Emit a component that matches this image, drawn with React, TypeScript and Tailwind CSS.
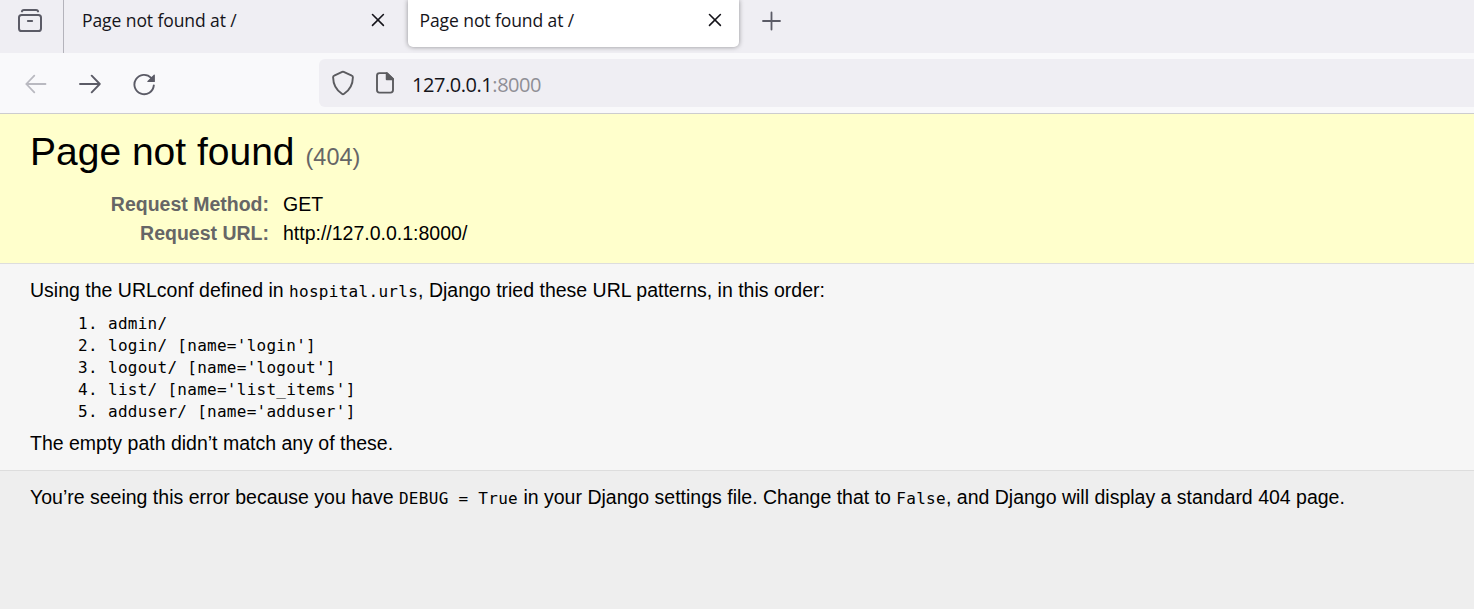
import type { ReactNode } from "react";

const patterns = [
  "admin/",
  "login/ [name='login']",
  "logout/ [name='logout']",
  "list/ [name='list_items']",
  "adduser/ [name='adduser']",
];

function Code({ children }: { children: ReactNode }) {
  return (
    <span className="font-['DejaVu_Sans_Mono',monospace] text-[16px] leading-none tracking-[0.29px]">
      {children}
    </span>
  );
}

function CloseIcon() {
  return (
    <svg width="14" height="14" viewBox="0 0 14 14" fill="none" stroke="#15141a" strokeWidth="1.6" strokeLinecap="round">
      <path d="M1.5 1.5 12.4 12.4M12.4 1.5 1.5 12.4" />
    </svg>
  );
}

function TabTitle() {
  return (
    <span className="font-['Open_Sans',sans-serif] text-[17.5px] leading-6 tracking-[-0.08px] whitespace-nowrap text-[#15141a]">
      Page not found at /
    </span>
  );
}

function TabBar() {
  return (
    <div className="flex h-[53px] items-start bg-[#efeef3]">
      <div className="flex h-[53px] w-16 shrink-0 border-r border-[#b4b3bb] pt-2 pl-[17px]">
        <svg width="26" height="26" viewBox="0 0 26 26" fill="none" stroke="#5b5b66" strokeWidth="2" strokeLinecap="round" strokeLinejoin="round">
          <path d="M4.900 3.400c.3-1 .9-1.400 1.900-1.400h12.400c1 0 1.600.4 1.900 1.400" />
          <rect x="2" y="7" width="22" height="16" rx="2.600" />
          <path d="M10.900 13h4.200" />
        </svg>
      </div>
      <div className="flex h-[47px] w-[344px] shrink-0 items-start justify-between pr-[23px] pl-[18px]">
        <div className="flex pt-[8px]">
          <TabTitle />
        </div>
        <div className="pt-[13px]">
          <CloseIcon />
        </div>
      </div>
      <div className="flex h-[47px] w-[331px] shrink-0 items-start justify-between rounded-b-[5px] bg-white pr-[17px] pl-[11.5px] shadow-[0_0_5px_rgba(0,0,0,0.4)]">
        <div className="flex pt-[8px]">
          <TabTitle />
        </div>
        <div className="pt-[13px]">
          <CloseIcon />
        </div>
      </div>
      <svg className="mt-[11px] ml-[23px]" width="19" height="20" viewBox="0 0 19 20" fill="none" stroke="#5b5b66" strokeWidth="1.8" strokeLinecap="round">
        <path d="M9.500 1.500v17M1 10h17" />
      </svg>
    </div>
  );
}

function Toolbar() {
  return (
    <div className="flex h-[61px] items-start border-b border-[#cccccf] bg-[#f9f9fb]">
      <div className="flex w-[319px] shrink-0 pt-[20px] pl-[25px]">
        <svg width="22" height="22" viewBox="0 0 22 22" fill="none" stroke="#b9b9c0" strokeWidth="1.8" strokeLinecap="round" strokeLinejoin="round">
          <path d="M20.500 11H1.300M9.300 2.700 1.300 11l8 8.300" />
        </svg>
        <svg className="ml-8" width="22" height="22" viewBox="0 0 22 22" fill="none" stroke="#5b5b66" strokeWidth="1.9" strokeLinecap="round" strokeLinejoin="round">
          <path d="M1 11h19.800M12.700 2.700 20.800 11l-8.100 8.300" />
        </svg>
        <svg className="ml-8" width="24" height="24" viewBox="0 0 24 24" fill="none" stroke="#5b5b66" strokeWidth="1.9" strokeLinecap="round">
          <path d="M18.200 4.900A9.700 9.700 0 1 0 20.800 12.400" />
          <path d="M21.900 2.300v6.200a.6.6 0 0 1-.6.6H15c-.7 0-1-.7-.5-1.200l6.300-6.100c.5-.4 1.100-.1 1.100.5Z" fill="#5b5b66" stroke="none" />
        </svg>
      </div>
      <div className="mt-[6px] flex h-12 grow items-start rounded-l-[6px] bg-[#efeef3] pl-[12px]">
        <svg className="mt-[11px]" width="24" height="26" viewBox="0 0 24 26" fill="none" stroke="#5b5b5f" strokeWidth="1.9" strokeLinejoin="round">
          <path d="M11.200 1.900a2 2 0 0 1 1.500 0l8.100 3.700c.7.300 1.100.9 1.100 1.700-.100 7.100-3.100 12.800-8.800 16.500a2 2 0 0 1-2.200 0C5.200 20.100 2.200 14.400 2.100 7.300c0-.8.4-1.400 1.100-1.700Z" />
        </svg>
        <svg className="mt-[12px] ml-5" width="20" height="24" viewBox="0 0 20 24" fill="none" stroke="#5b5b5f" strokeWidth="1.9" strokeLinejoin="round">
          <path d="M4.500 2.100h7.400L18 8v11.100c0 1.500-1 2.500-2.500 2.500h-11C3 21.600 2 20.600 2 19.100V4.600c0-1.500 1-2.500 2.500-2.500Z" />
          <path d="M11.700 2.200v6.100H18Z" fill="#5b5b5f" />
        </svg>
        <div className="mt-[12px] ml-[17px] font-['Open_Sans',sans-serif] text-[20px] leading-7 tracking-[-0.45px] whitespace-nowrap text-[#15141a]">
          127.0.0.1<span className="text-[#8f8f96]">:8000</span>
        </div>
      </div>
    </div>
  );
}

export default function App() {
  return (
    <div className="flex h-[609px] flex-col overflow-hidden bg-[#eeeeee] font-['Liberation_Sans',Arial,sans-serif] text-[19.5px] text-black">
      <TabBar />
      <Toolbar />
      <header className="h-[150px] border-b border-[#dddddd] bg-[#ffffcc] pt-[15px] pl-[30px]">
        <h1 className="text-[39px] leading-[46px] whitespace-nowrap">
          Page not found <span className="text-[23.4px] tracking-[0.1px] text-[#666666]">(404)</span>
        </h1>
        <dl className="mt-[10px] grid grid-cols-[239px_auto] gap-x-[14px] leading-[29px]">
          <dt className="text-right font-bold text-[#666666]">Request Method:</dt>
          <dd>GET</dd>
          <dt className="text-right font-bold text-[#666666]">Request URL:</dt>
          <dd>http://127.0.0.1:8000/</dd>
        </dl>
      </header>
      <main className="h-[207px] border-b border-[#dddddd] bg-[#f6f6f6] pt-[15px] pl-[30px]">
        <p className="h-[22px] leading-[22px] whitespace-nowrap">
          Using the URLconf defined in <Code>hospital.urls</Code>, Django tried these URL patterns, in this order:
        </p>
        <ol className="mt-[12px] pl-12 font-['DejaVu_Sans_Mono',monospace] text-[16px] leading-[22px] tracking-[0.27px] whitespace-pre">
          {patterns.map((pattern, i) => (
            <li key={pattern} className="flex h-[22px]">
              <span className="w-[30px]">{i + 1}.</span>
              <span>{pattern}</span>
            </li>
          ))}
        </ol>
        <p className="mt-[9px] leading-[22px]">The empty path didn’t match any of these.</p>
      </main>
      <footer className="pt-[15px] pl-[30px]">
        <p className="leading-[22px] whitespace-nowrap">
          You’re seeing this error because you have <Code>DEBUG = True</Code> in your Django settings file. Change that to{" "}
          <Code>False</Code>, and Django will display a standard 404 page.
        </p>
      </footer>
    </div>
  );
}
